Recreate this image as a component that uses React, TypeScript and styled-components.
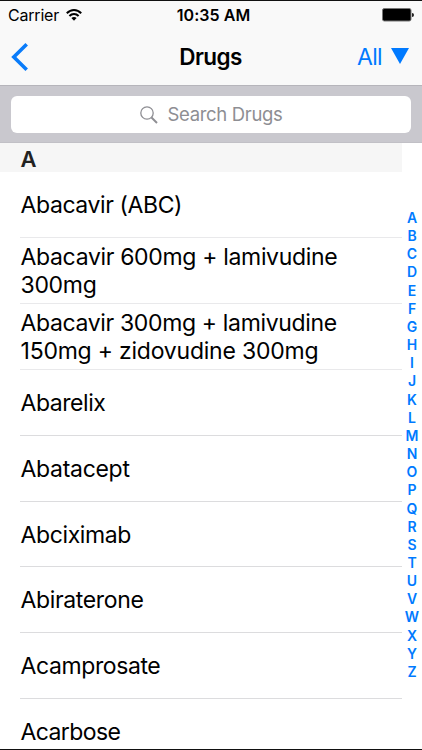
import React from "react";
import styled, { createGlobalStyle } from "styled-components";

const Global = createGlobalStyle`
  * { box-sizing: border-box; }
  body { margin: 0; background: #fff; font-family: Inter, "Liberation Sans", sans-serif; }
`;

const Screen = styled.div`
  width: 422px;
  height: 750px;
  display: flex;
  flex-direction: column;
  overflow: hidden;
  background: #fff;
  border-top: 1px solid #111;
  border-bottom: 1px solid #111;
  color: #000;
`;

const Header = styled.header`
  height: 85px;
  flex: none;
  background: #f9f9f9;
  border-bottom: 1px solid #b6b5bb;
`;

const StatusBar = styled.div`
  height: 27px;
  display: grid;
  grid-template-columns: 1fr auto 1fr;
  align-items: center;
  padding: 0 8px;
`;

const Carrier = styled.div`
  display: flex;
  align-items: center;
  gap: 7px;
  font-size: 16px;
  line-height: 27px;
  letter-spacing: -0.2px;
`;

const Clock = styled.div`
  font-size: 16px;
  line-height: 27px;
  font-weight: 600;
  letter-spacing: 0.05px;
  padding: 1px 0 0 5px;
`;

const Battery = styled.svg`
  justify-self: end;
`;

const NavBar = styled.div`
  height: 57px;
  display: grid;
  grid-template-columns: 1fr auto 1fr;
  align-items: center;
  padding: 0 13px 0 11px;
`;

const Title = styled.h1`
  margin: 0;
  padding-left: 1px;
  font-size: 22.5px;
  line-height: 30px;
  font-weight: 600;
  letter-spacing: -0.6px;
`;

const Filter = styled.div`
  justify-self: end;
  display: flex;
  align-items: center;
  gap: 9px;
  color: #007aff;
  font-size: 23px;
  line-height: 30px;
  letter-spacing: -0.7px;
`;

const SearchBar = styled.div`
  height: 57px;
  flex: none;
  padding: 10px 11px;
  background: #c9c8ce;
  border-bottom: 1px solid #c1c0c6;
`;

const SearchField = styled.div`
  height: 37px;
  border-radius: 6px;
  background: #fff;
  display: flex;
  align-items: center;
  justify-content: center;
  gap: 10px;
  color: #8e8e93;
  font-size: 18.5px;
  letter-spacing: -0.33px;

  span {
    margin-top: -2px;
  }
`;

const Content = styled.main`
  flex: 1;
  min-height: 0;
  display: flex;
`;

const List = styled.div`
  width: 402px;
`;

const SectionHeader = styled.div`
  height: 29px;
  padding: 1px 0 0 20.5px;
  background: #f6f6f6;
  font-size: 22px;
  line-height: 30px;
  font-weight: 600;
  color: #222;
`;

const Row = styled.div<{ $faint?: boolean }>`
  height: 65.92px;
  margin-left: 20px;
  padding: 1.2px 0 0 0.5px;
  display: flex;
  flex-direction: column;
  justify-content: center;
  border-bottom: 1px solid ${(p) => (p.$faint ? "#e9e9eb" : "#dcdcde")};
`;

const NameLine = styled.span<{ $spacing: number }>`
  font-size: 23px;
  line-height: 28px;
  letter-spacing: ${(p) => p.$spacing}px;
  white-space: nowrap;
`;

const Index = styled.nav`
  width: 20px;
  padding-top: 66px;
  display: flex;
  flex-direction: column;
  align-items: center;
  color: #007aff;
  font-size: 14px;
  font-weight: 600;
  line-height: 18.16px;
`;

type Line = [text: string, spacing: number];

const drugs: { lines: Line[]; faint?: boolean }[] = [
  { lines: [["Abacavir (ABC)", -0.4]], faint: true },
  { lines: [["Abacavir 600mg + lamivudine", -0.33], ["300mg", -0.3]], faint: true },
  { lines: [["Abacavir 300mg + lamivudine", -0.35], ["150mg + zidovudine 300mg", -0.22]], faint: true },
  { lines: [["Abarelix", -0.45]] },
  { lines: [["Abatacept", -0.3]] },
  { lines: [["Abciximab", -0.38]] },
  { lines: [["Abiraterone", -0.35]] },
  { lines: [["Acamprosate", -0.4]] },
  { lines: [["Acarbose", -0.6]] },
];

const WifiIcon = () => (
  <svg width="16" height="12" viewBox="0 0 16 12" fill="none" stroke="#000" strokeWidth="2">
    <path d="M.8 4.3C5-.1 11-.1 15.2 4.3" />
    <path d="M3.4 7C6 4.3 10 4.3 12.6 7" />
    <path d="M5.4 9.1C6.9 7.6 9.1 7.6 10.6 9.1L8 11.8Z" fill="#000" stroke="none" />
  </svg>
);

export default function App() {
  return (
    <>
      <Global />
      <Screen>
        <Header>
          <StatusBar>
            <Carrier>
              <span>Carrier</span>
              <WifiIcon />
            </Carrier>
            <Clock>10:35 AM</Clock>
            <Battery width="32" height="14" viewBox="0 0 32 14">
              <rect x=".5" y=".5" width="28.5" height="12.5" rx="1.8" fill="#000" stroke="#777" />
              <path d="M30 5a2 2 0 0 1 0 4Z" fill="#222" />
            </Battery>
          </StatusBar>
          <NavBar>
            <svg width="18" height="28" viewBox="0 0 18 28" fill="none" stroke="#0a7cfa" strokeWidth="3.6">
              <path d="M15.7 1.3L2.8 14L15.7 26.7" />
            </svg>
            <Title>Drugs</Title>
            <Filter>
              <span>All</span>
              <svg width="18" height="18" viewBox="0 0 18 18">
                <path d="M0 0H18L9 16Z" fill="#007aff" />
              </svg>
            </Filter>
          </NavBar>
        </Header>
        <SearchBar>
          <SearchField>
            <svg width="18" height="18" viewBox="0 0 18 18" fill="none" stroke="#8e8e93">
              <circle cx="7" cy="7" r="6.2" strokeWidth="1.3" />
              <path d="M11.5 11.5L17 17" strokeWidth="1.9" />
            </svg>
            <span>Search Drugs</span>
          </SearchField>
        </SearchBar>
        <Content>
          <List>
            <SectionHeader>A</SectionHeader>
            {drugs.map((d) => (
              <Row key={d.lines[0][0]} $faint={d.faint}>
                {d.lines.map(([text, spacing]) => (
                  <NameLine key={text} $spacing={spacing}>
                    {text}
                  </NameLine>
                ))}
              </Row>
            ))}
          </List>
          <Index>
            {"ABCDEFGHIJKLMNOPQRSTUVWXYZ".split("").map((c) => (
              <span key={c}>{c}</span>
            ))}
          </Index>
        </Content>
      </Screen>
    </>
  );
}
